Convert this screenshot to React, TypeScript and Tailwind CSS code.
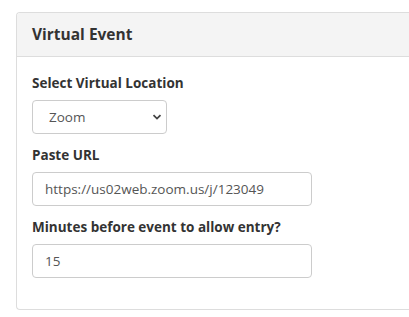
import React from 'react';

const font = { fontFamily: '"Segoe UI", "Open Sans", "Noto Sans", sans-serif' };

const Field: React.FC<{ label: string; children: React.ReactNode }> = ({ label, children }) => (
  <div className="mb-[13px]">
    <label className="mb-[9px] block text-[13.5px] font-bold leading-[16px] text-[#333]">{label}</label>
    {children}
  </div>
);

export default function App() {
  return (
    <div className="min-h-[317px] bg-white pl-4 pt-3" style={font}>
      <div className="h-[298px] overflow-hidden rounded-l-[4px] border-y border-l border-[#ddd] bg-white">
        <div className="flex h-[44px] items-center border-b border-[#ddd] bg-[#f4f4f4] px-[15px]">
          <h3 className="text-[15.5px] font-bold text-[#333]">Virtual Event</h3>
        </div>
        <div className="px-[15px] pt-[18px]">
          <Field label="Select Virtual Location">
            <div className="relative h-[34px] w-[135px] rounded-[4px] border border-[#ccc] bg-white">
              <span className="absolute left-4 top-[7px] text-[13.5px] leading-[18px] text-[#555]">Zoom</span>
              <svg className="absolute right-[4px] top-[12px]" width="10" height="8" viewBox="0 0 10 8">
                <path d="M1.5 2.2 L5 5.6 L8.5 2.2" fill="none" stroke="#444" strokeWidth="1.8" />
              </svg>
            </div>
          </Field>
          <Field label="Paste URL">
            <input
              readOnly
              value="https://us02web.zoom.us/j/123049"
              className="h-[34px] w-[280px] rounded-[4px] border border-[#ccc] px-3 text-[13.5px] text-[#555] outline-none"
              style={font}
            />
          </Field>
          <Field label="Minutes before event to allow entry?">
            <input
              readOnly
              value="15"
              className="h-[34px] w-[280px] rounded-[4px] border border-[#ccc] px-3 text-[13.5px] text-[#555] outline-none"
              style={font}
            />
          </Field>
        </div>
      </div>
    </div>
  );
}
